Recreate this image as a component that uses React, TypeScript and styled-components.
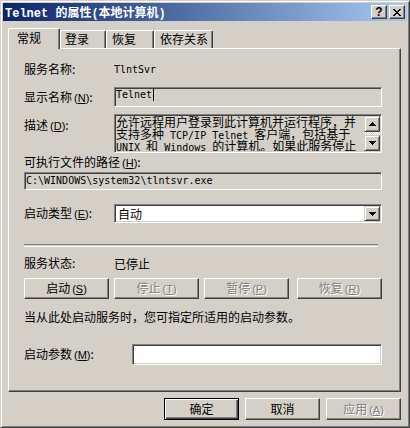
import React from 'react'
import styled, { createGlobalStyle } from 'styled-components'

const FACE = '#d4d0c8'
const SHADOW = '#808080'
const DARK = '#404040'

const GlobalStyle = createGlobalStyle`
  html, body {
    margin: 0;
    padding: 0;
    background: ${FACE};
  }
  body {
    font-family: "Noto Sans CJK SC", sans-serif;
    font-size: 12px;
    color: #000;
  }
`

const Window = styled.div`
  box-sizing: border-box;
  width: 410px;
  height: 428px;
  display: flex;
  flex-direction: column;
  padding: 2px;
  background: ${FACE};
  border: 1px solid;
  border-color: ${FACE} ${DARK} ${DARK} ${FACE};
  box-shadow: inset 1px 1px #fff, inset -1px -1px ${SHADOW};
`

const TitleBar = styled.div`
  height: 18px;
  flex: none;
  display: flex;
  align-items: center;
  padding: 0 2px;
  background: linear-gradient(to right, #0a246a, #a6caf0);
  color: #fff;
  font-family: "Liberation Mono", "Noto Sans CJK SC", monospace;
  font-weight: bold;
  font-size: 12px;
  white-space: pre;
`

const CaptionButtons = styled.div`
  margin-left: auto;
  display: flex;
  gap: 2px;
`

const CaptionButton = styled.div`
  box-sizing: border-box;
  width: 16px;
  height: 14px;
  display: flex;
  align-items: center;
  justify-content: center;
  background: ${FACE};
  border: 1px solid;
  border-color: #fff ${DARK} ${DARK} #fff;
  box-shadow: inset -1px -1px ${SHADOW};
  color: #000;
  font: bold 12px "Liberation Sans", sans-serif;
`

const Body = styled.div`
  flex: 1;
  display: flex;
  flex-direction: column;
  padding: 7px 6px 0 5px;
`

const TabStrip = styled.div`
  height: 20px;
  display: flex;
  align-items: flex-end;
`

const Tab = styled.div<{ $active?: boolean; $w: number; $pad: number }>`
  box-sizing: border-box;
  width: ${(p) => p.$w}px;
  height: ${(p) => (p.$active ? 21 : 18)}px;
  margin-bottom: ${(p) => (p.$active ? -1 : 0)}px;
  padding: ${(p) => (p.$active ? 2 : 1)}px 0 0 ${(p) => p.$pad}px;
  line-height: 14px;
  background: ${FACE};
  border-top: 1px solid #fff;
  border-left: 1px solid #fff;
  border-right: 1px solid ${DARK};
  box-shadow: inset -1px 0 ${SHADOW};
  border-radius: 2px 2px 0 0;
  position: relative;
  z-index: ${(p) => (p.$active ? 2 : 1)};
`

const Panel = styled.div`
  box-sizing: border-box;
  height: 344px;
  display: flex;
  flex-direction: column;
  padding: 0 18px 0 15px;
  border: 1px solid;
  border-color: #fff ${DARK} ${DARK} #fff;
  box-shadow: inset -1px -1px ${SHADOW};
`

const Row = styled.div<{ $top: number; $h?: number; $align?: string }>`
  display: flex;
  align-items: ${(p) => p.$align ?? 'center'};
  margin-top: ${(p) => p.$top}px;
  height: ${(p) => p.$h ?? 14}px;
  flex: none;
`

const Label = styled.div<{ $w?: number; $pt?: number }>`
  width: ${(p) => p.$w ?? 90}px;
  flex: none;
  padding-top: ${(p) => p.$pt ?? 0}px;
  line-height: 14px;
  white-space: nowrap;
`

const HkText = styled.span`
  font-family: "Liberation Sans", sans-serif;
  font-size: 11px;
  margin-left: 2px;
`

const Hk: React.FC<{ k: string }> = ({ k }) => (
  <HkText>
    (<u>{k}</u>)
  </HkText>
)

const Mono = styled.span`
  font-family: "DejaVu Sans Mono", "Liberation Mono", monospace;
  font-size: 10px;
`

const Sunken = styled.div<{ $bg?: string }>`
  box-sizing: border-box;
  height: 100%;
  flex: 1;
  border: 1px solid;
  border-color: ${SHADOW} #fff #fff ${SHADOW};
  box-shadow: inset 1px 1px ${DARK}, inset -1px -1px ${FACE};
  background: ${(p) => p.$bg ?? '#fff'};
`

const EditField = styled(Sunken)`
  display: flex;
  align-items: flex-start;
  padding-left: 1px;
  line-height: 14px;
`

const Caret = styled.span`
  width: 1px;
  height: 13px;
  background: #000;
  margin-left: 1px;
`

const PathField = styled(Sunken)`
  display: flex;
  align-items: center;
  padding-left: 1px;
  line-height: 14px;
`

const DescField = styled(Sunken)`
  display: flex;
  padding: 1px;
`

const DescText = styled.div`
  flex: 1;
  overflow: hidden;
  line-height: 12px;
`

const DescLine = styled.div`
  height: 12px;
  white-space: pre;
`

const ScrollBar = styled.div`
  width: 16px;
  display: flex;
  flex-direction: column;
`

const ScrollTrack = styled.div`
  flex: 1;
  background: repeating-conic-gradient(#fff 0 25%, ${FACE} 0 50%) 0 0 / 2px 2px;
`

const ArrowButton = styled.div<{ $h?: number }>`
  box-sizing: border-box;
  width: 16px;
  height: ${(p) => p.$h ?? 16}px;
  display: flex;
  align-items: center;
  justify-content: center;
  background: ${FACE};
  border: 1px solid;
  border-color: ${FACE} ${DARK} ${DARK} ${FACE};
  box-shadow: inset 1px 1px #fff, inset -1px -1px ${SHADOW};
`

const ComboField = styled(Sunken)`
  display: flex;
  align-items: center;
  padding: 1px;
`

const ComboText = styled.div`
  flex: 1;
  padding-left: 2px;
  line-height: 14px;
`

const Separator = styled.div`
  width: 354px;
  height: 1px;
  margin-top: 21px;
  border-top: 1px solid ${SHADOW};
  border-bottom: 1px solid #fff;
  flex: none;
`

const ServiceButtons = styled.div`
  display: flex;
  gap: 5px;
  height: 21px;
  margin-top: 8px;
  flex: none;

  & > :last-child {
    margin-left: auto;
  }
`

const PushButton = styled.button<{ $w: number; $default?: boolean }>`
  box-sizing: border-box;
  width: ${(p) => p.$w}px;
  height: 100%;
  padding: 0;
  margin: 0;
  background: ${FACE};
  font-family: "Noto Sans CJK SC", sans-serif;
  font-size: 12px;
  line-height: 14px;
  color: #000;
  border: 1px solid;
  border-color: ${(p) => (p.$default ? '#000' : `#fff ${DARK} ${DARK} #fff`)};
  box-shadow: ${(p) =>
    p.$default
      ? `inset 1px 1px #fff, inset -1px -1px ${DARK}, inset -2px -2px ${SHADOW}`
      : `inset -1px -1px ${SHADOW}`};

  &:disabled {
    color: ${SHADOW};
    text-shadow: 1px 1px #fff;
  }
`

const Note = styled.div`
  margin-top: 11px;
  line-height: 14px;
  flex: none;
`

const DialogButtons = styled.div`
  display: flex;
  justify-content: flex-end;
  gap: 6px;
  height: 22px;
  margin-top: 6px;
`

const Arrow: React.FC<{ up?: boolean }> = ({ up }) => (
  <svg width="7" height="4" viewBox="0 0 7 4" style={up ? { transform: 'scaleY(-1)' } : undefined}>
    <path d="M0 0h7v1H0zM1 1h5v1H1zM2 2h3v1H2zM3 3h1v1H3z" fill="#000" />
  </svg>
)

const CloseGlyph = () => (
  <svg width="8" height="7" viewBox="0 0 8 7">
    <path
      d="M0 0h2v1H0zM6 0h2v1H6zM1 1h2v1H1zM5 1h2v1H5zM2 2h4v1H2zM3 3h2v1H3zM2 4h4v1H2zM1 5h2v1H1zM5 5h2v1H5zM0 6h2v1H0zM6 6h2v1H6z"
      fill="#000"
    />
  </svg>
)

const App: React.FC = () => (
  <>
    <GlobalStyle />
    <Window>
      <TitleBar>
        <span>Telnet 的属性(本地计算机)</span>
        <CaptionButtons>
          <CaptionButton>?</CaptionButton>
          <CaptionButton>
            <CloseGlyph />
          </CaptionButton>
        </CaptionButtons>
      </TitleBar>
      <Body>
        <TabStrip>
          <Tab $active $w={52} $pad={8}>
            常规
          </Tab>
          <Tab $w={46} $pad={4}>
            登录
          </Tab>
          <Tab $w={48} $pad={5}>
            恢复
          </Tab>
          <Tab $w={59} $pad={5}>
            依存关系
          </Tab>
        </TabStrip>
        <Panel>
          <Row $top={10} $h={20}>
            <Label>服务名称:</Label>
            <Mono>TlntSvr</Mono>
          </Row>
          <Row $top={8} $h={20}>
            <Label>
              显示名称<Hk k="N" />:
            </Label>
            <EditField $bg={FACE}>
              <Mono>Telnet</Mono>
              <Caret />
            </EditField>
          </Row>
          <Row $top={7} $h={39} $align="flex-start">
            <Label $pt={4}>
              描述<Hk k="D" />:
            </Label>
            <DescField $bg={FACE}>
              <DescText>
                <DescLine>允许远程用户登录到此计算机并运行程序，并</DescLine>
                <DescLine>
                  支持多种<Mono> TCP/IP Telnet </Mono>客户端，包括基于
                </DescLine>
                <DescLine>
                  <Mono>UNIX </Mono>和<Mono> Windows </Mono>的计算机。如果此服务停止
                </DescLine>
              </DescText>
              <ScrollBar>
                <ArrowButton>
                  <Arrow up />
                </ArrowButton>
                <ScrollTrack />
                <ArrowButton>
                  <Arrow />
                </ArrowButton>
              </ScrollBar>
            </DescField>
          </Row>
          <Row $top={2}>
            <Label $w={200}>
              可执行文件的路径<Hk k="H" />:
            </Label>
          </Row>
          <Row $top={3} $h={18}>
            <PathField $bg={FACE}>
              <Mono>C:\WINDOWS\system32\tlntsvr.exe</Mono>
            </PathField>
          </Row>
          <Row $top={14} $h={19}>
            <Label>
              启动类型<Hk k="E" />:
            </Label>
            <ComboField>
              <ComboText>自动</ComboText>
              <ArrowButton $h={15}>
                <Arrow />
              </ArrowButton>
            </ComboField>
          </Row>
          <Separator />
          <Row $top={9}>
            <Label>服务状态:</Label>
            <span>已停止</span>
          </Row>
          <ServiceButtons>
            <PushButton $w={85}>
              启动<Hk k="S" />
            </PushButton>
            <PushButton $w={85} disabled>
              停止<Hk k="T" />
            </PushButton>
            <PushButton $w={85} disabled>
              暂停<Hk k="P" />
            </PushButton>
            <PushButton $w={85} disabled>
              恢复<Hk k="R" />
            </PushButton>
          </ServiceButtons>
          <Note>当从此处启动服务时，您可指定所适用的启动参数。</Note>
          <Row $top={20} $h={21}>
            <Label $w={108}>
              启动参数<Hk k="M" />:
            </Label>
            <Sunken />
          </Row>
        </Panel>
        <DialogButtons>
          <PushButton $w={75} $default>
            确定
          </PushButton>
          <PushButton $w={75}>取消</PushButton>
          <PushButton $w={75} disabled>
            应用<Hk k="A" />
          </PushButton>
        </DialogButtons>
      </Body>
    </Window>
  </>
)

export default App
